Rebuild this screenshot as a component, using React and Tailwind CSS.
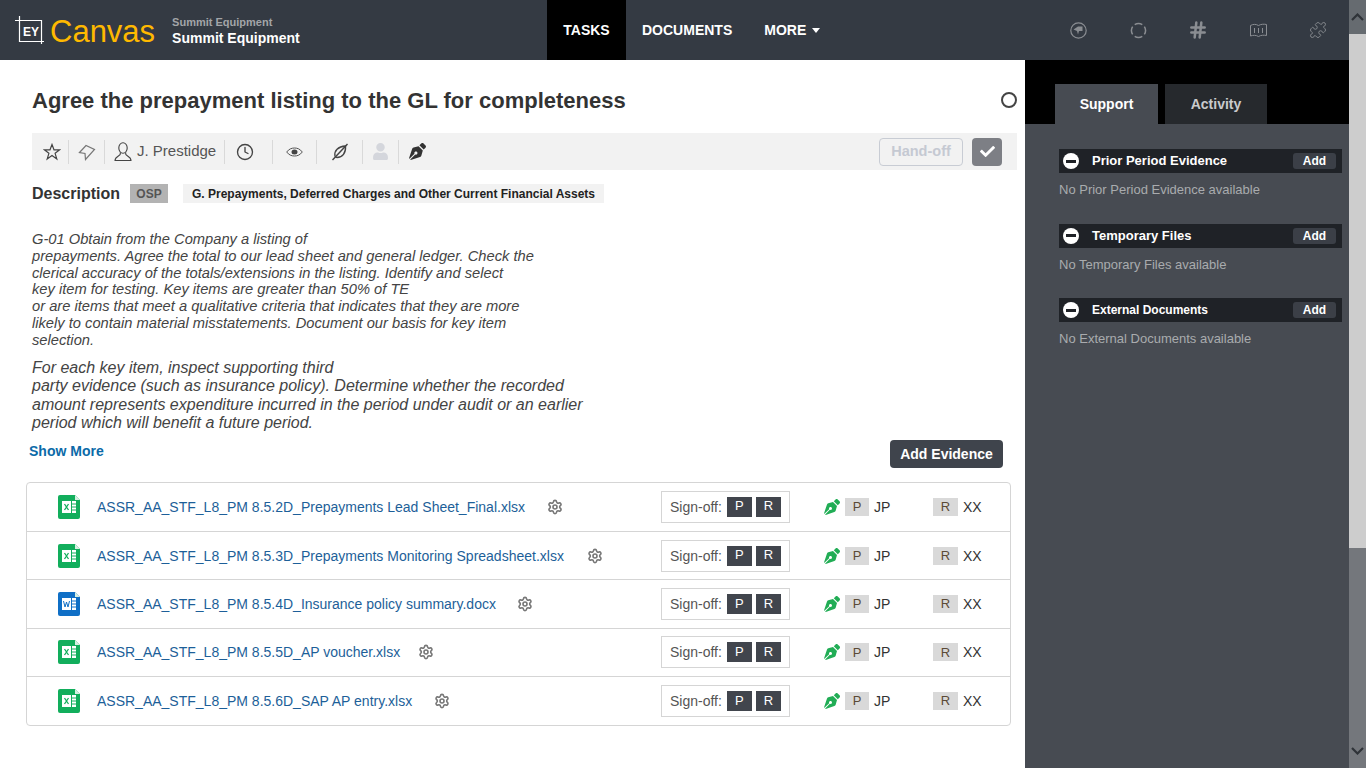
import { Clock, Hash, Puzzle, Settings } from "lucide-react";
import { FaCheck, FaPenNib, FaUser } from "react-icons/fa";

const files = [
  { name: "ASSR_AA_STF_L8_PM 8.5.2D_Prepayments Lead Sheet_Final.xlsx", type: "x", gearGap: "ml-[22px]" },
  { name: "ASSR_AA_STF_L8_PM 8.5.3D_Prepayments Monitoring Spreadsheet.xlsx", type: "x", gearGap: "ml-[23px]" },
  { name: "ASSR_AA_STF_L8_PM 8.5.4D_Insurance policy summary.docx", type: "w", gearGap: "ml-[21px]" },
  { name: "ASSR_AA_STF_L8_PM 8.5.5D_AP voucher.xlsx", type: "x", gearGap: "ml-[18px]" },
  { name: "ASSR_AA_STF_L8_PM 8.5.6D_SAP AP entry.xlsx", type: "x", gearGap: "ml-[22px]" },
];

const support = [
  { title: "Prior Period Evidence", size: "text-[13px]" },
  { title: "Temporary Files", size: "text-[13px]" },
  { title: "External Documents", size: "text-xs" },
];

function Logo() {
  return (
    <svg width="30" height="30" viewBox="0 0 30 30" fill="none" stroke="#fff" className="shrink-0">
      <path d="M4.500 1v25.500H29M0 5.500h26.500V29" strokeWidth="1.200" />
      <text x="8" y="21" fill="#fff" stroke="none" fontSize="12" fontWeight="700" fontFamily="Liberation Sans">EY</text>
    </svg>
  );
}

function StarIcon() {
  return (
    <svg width="18" height="18" viewBox="0 0 18 18" fill="none" stroke="#444" strokeWidth="1.200" strokeLinejoin="miter">
      <path d="M9 1.500l2 5.300h5.700l-4.600 3.500 1.700 5.700L9 12.600 4.200 16l1.700-5.700L1.300 6.800H7z" />
    </svg>
  );
}

function TagIcon() {
  return (
    <svg width="18" height="18" viewBox="0 0 18 18" fill="none" stroke="#777" strokeWidth="1.200">
      <path d="M1.500 9.500L8 2.500l8.500 4L7.500 16.500 7 10.500z" />
    </svg>
  );
}

function UserOutline() {
  return (
    <svg width="18" height="20" viewBox="0 0 18 20" fill="none" stroke="#444" strokeWidth="1.100" className="mr-[5px] shrink-0">
      <ellipse cx="9" cy="6" rx="4.200" ry="5.300" />
      <path d="M6.300 10.500v1.700C6 14 1 14.500 1 18.500h16c0-4-5-4.500-5.300-6.300v-1.700" />
    </svg>
  );
}

function EyeIcon() {
  return (
    <svg width="17" height="10" viewBox="0 0 17 10" fill="none">
      <path d="M.7 5C3 2 5.500 1 8.500 1s5.500 1 7.800 4c-2.300 3-4.800 4-7.800 4S3 8 .7 5z" stroke="#555" strokeWidth="1" />
      <ellipse cx="8.500" cy="5" rx="3" ry="2.500" fill="#444" />
    </svg>
  );
}

function LeafSlash() {
  return (
    <svg width="18" height="18" viewBox="0 0 18 18" fill="none" stroke="#444" strokeWidth="1.400">
      <path d="M4 13C3 8 7 3.500 14.500 3c.5 7-3 11.500-8.500 11.500-1 0-1.500-.5-2-1.500z" />
      <path d="M1.500 17L16.500 1" />
    </svg>
  );
}

function HeaderBackIcon() {
  return (
    <svg width="17" height="17" viewBox="0 0 17 17" fill="none">
      <circle cx="8.500" cy="8.500" r="7.700" stroke="#8a8d92" strokeWidth="1.200" />
      <path d="M3.500 7.500L8 4.500h4.500v4.500H9l-1 3.500-1-3.500z" fill="#8a8d92" />
    </svg>
  );
}

function HeaderDashCircle() {
  return (
    <svg width="17" height="17" viewBox="0 0 17 17" fill="none" stroke="#8a8d92" strokeWidth="1.500">
      <path d="M4.700 2.630A7 7 0 0 1 12.300 2.630M14.370 4.700A7 7 0 0 1 14.370 12.300M12.300 14.370A7 7 0 0 1 4.700 14.370M2.630 12.300A7 7 0 0 1 2.630 4.700" />
    </svg>
  );
}

function HeaderBook() {
  return (
    <svg width="17" height="15" viewBox="0 0 17 15" fill="none" stroke="#8a8d92" strokeWidth="1">
      <path d="M.5 2.500C3 1 6 1 8.500 2.500 11 1 14 1 16.500 1.500v11C14 12 11 12 8.500 13.500 6 12 3 12 .5 13z" />
      <path d="M4.500 5v5M8.500 5v5M12.500 5v5" />
    </svg>
  );
}

function FileIcon({ type }) {
  const bg = type === "w" ? "#0f6fc6" : "#12ae5c";
  return (
    <svg width="22" height="24" viewBox="0 0 22 24" className="shrink-0">
      <path d="M2 0h15l5 5v17a2 2 0 0 1-2 2H2a2 2 0 0 1-2-2V2a2 2 0 0 1 2-2z" fill={bg} />
      <path d="M17 0l5 5h-5z" fill="#d7efe2" />
      <rect x="4" y="6" width="9" height="12" fill="#fff" />
      <path d="M14 6h4v12h-4z" fill="#fff" />
      <path d="M14 9h4M14 12h4M14 15h4" stroke={bg} strokeWidth="1" />
      {type === "x" ? (
        <path d="M6.500 9l4 6M10.500 9l-4 6" stroke={bg} strokeWidth="1.300" />
      ) : (
        <path d="M5.500 9l1.500 6 1.500-5 1.500 5 1.500-6" stroke={bg} strokeWidth="1" fill="none" />
      )}
    </svg>
  );
}

function FileRow({ file, first }) {
  return (
    <div className={`flex items-center h-[48.4px] ${first ? "" : "border-t border-[#d5d5d5]"}`}>
      <div className="flex items-center w-[634px] pl-[31px]">
        <FileIcon type={file.type} />
        <span className="ml-[17px] text-sm text-[#1d5f99] whitespace-nowrap">{file.name}</span>
        <Settings size={16} strokeWidth={2.400} className={`${file.gearGap} text-[#777] shrink-0`} />
      </div>
      <div className="flex items-center w-[129px] h-[32px] border border-[#d5d5d5] pl-2 text-sm text-[#555]">
        <span>Sign-off:</span>
        <span className="ml-[5px] w-[25px] h-[20px] bg-[#41454d] text-white text-[13px] flex items-center justify-center">P</span>
        <span className="ml-[4px] w-[25px] h-[20px] bg-[#41454d] text-white text-[13px] flex items-center justify-center">R</span>
      </div>
      <FaPenNib size={16} className="ml-[34px] text-[#21ad55] shrink-0" />
      <span className="ml-[5px] w-[24px] h-[18px] bg-[#d9d9d9] text-[#5b4a36] text-[13px] flex items-center justify-center">P</span>
      <span className="ml-[5px] w-[59px] text-sm text-[#333]">JP</span>
      <span className="w-[25px] h-[18px] bg-[#d9d9d9] text-[#5b4a36] text-[13px] flex items-center justify-center">R</span>
      <span className="ml-[5px] text-sm text-[#333]">XX</span>
    </div>
  );
}

function SupportSection({ title, size }) {
  return (
    <div className="h-[74.500px] pl-[34px] pr-[7px]">
      <div className="flex items-center h-[24px] bg-[#1f2227] pl-[4px] pr-[6px]">
        <span className="w-4 h-4 rounded-full bg-white flex items-center justify-center shrink-0">
          <span className="w-[10px] h-[3px] bg-[#1f2227]" />
        </span>
        <span className={`ml-[13px] ${size} font-bold text-white`}>{title}</span>
        <span className="ml-auto w-[43px] h-[16px] rounded-[3px] bg-[#3b3f47] text-white text-xs font-bold flex items-center justify-center">Add</span>
      </div>
      <p className="mt-[8px] text-[13px] leading-[18px] text-[#a9abae]">No {title} available</p>
    </div>
  );
}

export default function App() {
  return (
    <div className="flex h-[768px] overflow-hidden font-['Liberation_Sans',Arial,sans-serif]">
      <div className="flex flex-col w-[1349px]">
        <header className="flex items-center h-[60px] bg-[#343a43] shrink-0">
          <div className="flex items-center w-[547px] pl-[15px]">
            <Logo />
            <span className="ml-[5px] mt-[3px] text-[31px] leading-none text-[#ffb900]">Canvas</span>
            <div className="ml-[17px] mt-[2px] flex flex-col">
              <span className="text-[11px] leading-[14px] font-bold text-[#a3a5a8]">Summit Equipment</span>
              <span className="text-sm leading-[18px] font-bold text-white">Summit Equipment</span>
            </div>
          </div>
          <nav className="flex items-center h-full text-sm font-bold text-white">
            <span className="flex items-center justify-center w-[79px] h-full bg-black">TASKS</span>
            <span className="ml-[16px]">DOCUMENTS</span>
            <span className="ml-[32px] flex items-center">
              MORE
              <span className="ml-[6px] w-0 h-0 border-x-[4.500px] border-x-transparent border-t-[5px] border-t-white" />
            </span>
          </nav>
          <div className="ml-auto flex items-center pr-[1px] text-[#8a8d92]">
            <span className="w-[60px] flex justify-center"><HeaderBackIcon /></span>
            <span className="w-[60px] flex justify-center"><HeaderDashCircle /></span>
            <span className="w-[60px] flex justify-center"><Hash size={20} strokeWidth={3} /></span>
            <span className="w-[60px] flex justify-center"><HeaderBook /></span>
            <span className="w-[60px] flex justify-center"><Puzzle size={18} strokeWidth={1.200} /></span>
          </div>
        </header>

        <div className="flex flex-1 min-h-0">
          <main className="w-[1025px] bg-white pt-[24px] pl-[32px] pr-[8px]">
            <div className="flex items-center justify-between h-[32px] mb-[17px]">
              <h1 className="text-[22px] font-bold text-[#333]">Agree the prepayment listing to the GL for completeness</h1>
              <div className="w-4 h-4 rounded-full border-2 border-[#444]" />
            </div>

            <div className="flex items-center h-[37px] bg-[#f2f2f2] text-[#444]">
              <span className="w-[37px] h-[24px] border-r border-[#d9d9d9] flex items-center justify-center pl-[3px]"><StarIcon /></span>
              <span className="w-[36px] h-[24px] border-r border-[#d9d9d9] flex items-center justify-center"><TagIcon /></span>
              <span className="w-[120px] h-[24px] border-r border-[#d9d9d9] flex items-center pl-[9px] text-[15px] text-[#555]">
                <UserOutline />J. Prestidge
              </span>
              <span className="w-[48px] h-[24px] border-r border-[#d9d9d9] flex items-center justify-center pr-[8px]"><Clock size={18} strokeWidth={1.800} /></span>
              <span className="w-[44px] h-[24px] border-r border-[#d9d9d9] flex items-center justify-center"><EyeIcon /></span>
              <span className="w-[46px] h-[24px] border-r border-[#d9d9d9] flex items-center justify-center"><LeafSlash /></span>
              <span className="w-[36px] h-[24px] border-r border-[#d9d9d9] flex items-center justify-center"><FaUser size={17} className="text-[#d4d6dc]" /></span>
              <span className="w-[36px] h-[24px] flex items-center justify-center"><FaPenNib size={17} className="text-[#333]" /></span>
              <span className="ml-auto flex items-center justify-center w-[84px] h-[28px] border border-[#c8ccd4] rounded text-[14.500px] font-bold text-[#c5c9d2]">Hand-off</span>
              <span className="ml-[9px] mr-[15px] flex items-center justify-center w-[30px] h-[28px] bg-[#7d7f85] rounded"><FaCheck size={15} className="text-white" /></span>
            </div>

            <div className="flex items-center h-[19px] mt-[14px]">
              <span className="text-base font-bold text-[#333]">Description</span>
              <span className="ml-[10px] flex items-center justify-center w-[38px] h-[19px] bg-[#b3b3b3] text-xs font-bold text-[#555]">OSP</span>
              <span className="ml-[15px] flex items-center h-[19px] px-[9px] bg-[#f2f2f2] text-xs font-bold text-[#222]">G. Prepayments, Deferred Charges and Other Current Financial Assets</span>
            </div>

            <p className="mt-[28px] text-[14.700px] italic leading-[16.800px] text-[#444] whitespace-nowrap">
              G-01 Obtain from the Company a listing of<br />
              prepayments. Agree the total to our lead sheet and general ledger. Check the<br />
              clerical accuracy of the totals/extensions in the listing. Identify and select<br />
              key item for testing. Key items are greater than 50% of TE<br />
              or are items that meet a qualitative criteria that indicates that they are more<br />
              likely to contain material misstatements. Document our basis for key item<br />
              selection.
            </p>
            <p className="mt-[10px] text-base italic leading-[18.500px] text-[#444] whitespace-nowrap">
              For each key item, inspect supporting third<br />
              party evidence (such as insurance policy). Determine whether the recorded<br />
              amount represents expenditure incurred in the period under audit or an earlier<br />
              period which will benefit a future period.
            </p>

            <div className="flex items-start justify-between mt-[7px] ml-[-3px] mr-[14px]">
              <span className="mt-[1px] text-sm font-bold text-[#0b6aa8]">Show More</span>
              <span className="flex items-center justify-center w-[113px] h-[28px] bg-[#3f444c] rounded text-sm font-bold text-white">Add Evidence</span>
            </div>

            <div className="mt-[14px] ml-[-6px] mr-[6px] border border-[#d5d5d5] rounded">
              {files.map((file, i) => (
                <FileRow key={file.name} file={file} first={i === 0} />
              ))}
            </div>
          </main>

          <aside className="flex flex-col w-[324px] bg-[#474b52]">
            <div className="flex items-end h-[64px] bg-black pl-[30px] shrink-0">
              <span className="flex items-center justify-center w-[103px] h-[40px] bg-[#474b52] text-sm font-bold text-white">Support</span>
              <span className="ml-[7px] flex items-center justify-center w-[102px] h-[40px] bg-[#26292d] text-sm font-bold text-[#c9cacc]">Activity</span>
            </div>
            <div className="pt-[25px]">
              {support.map((s) => (
                <SupportSection key={s.title} title={s.title} size={s.size} />
              ))}
            </div>
          </aside>
        </div>
      </div>

      <div className="flex flex-col w-[17px] bg-[#74777c]">
        <div className="flex items-center justify-center h-[34px] bg-[#666b70] text-[#2f3338]">
          <svg width="13" height="8" viewBox="0 0 13 8" fill="none" stroke="currentColor" strokeWidth="2.200"><path d="M1 7l5.500-5.500L12 7" /></svg>
        </div>
        <div className="h-[514px] bg-[#cdcdcd]" />
        <div className="mt-auto flex items-center justify-center h-[34px] text-[#2f3338]">
          <svg width="13" height="8" viewBox="0 0 13 8" fill="none" stroke="currentColor" strokeWidth="2.200"><path d="M1 1l5.500 5.500L12 1" /></svg>
        </div>
      </div>
    </div>
  );
}
